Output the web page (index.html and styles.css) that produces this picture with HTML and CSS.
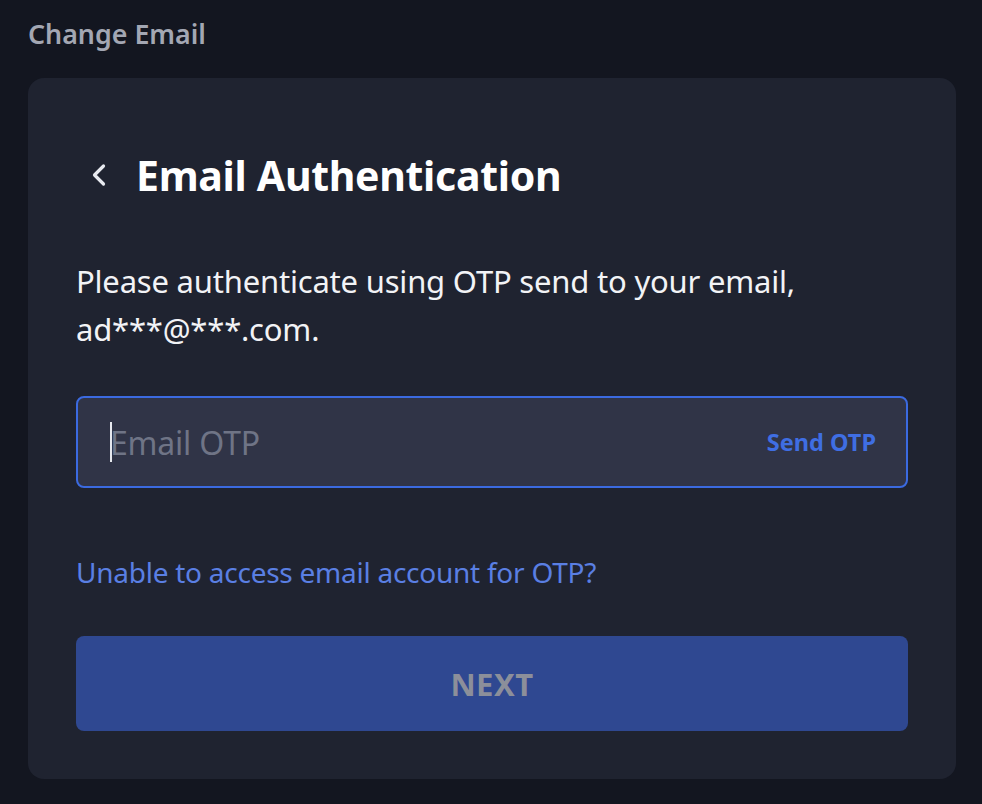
FILE: index.html
```html
<!DOCTYPE html>
<html lang="en">
<head>
<meta charset="utf-8">
<title>Change Email</title>
<link rel="stylesheet" href="styles.css">
</head>
<body>
<div class="page">
  <div class="page-title">Change Email</div>
  <div class="card">
    <div class="heading">
      <svg class="back" width="18" height="26" viewBox="0 0 18 26" aria-hidden="true"><path d="M13.5 4 L4.5 13 L13.5 22" fill="none" stroke="#e8eaf0" stroke-width="3.2" stroke-linecap="round" stroke-linejoin="round"/></svg>
      <h1 class="heading-text">Email Authentication</h1>
    </div>
    <p class="desc">Please authenticate using OTP send to your email,<br>ad***@***.com.</p>
    <div class="field">
      <span class="caret"></span>
      <span class="placeholder">Email OTP</span>
      <span class="send">Send OTP</span>
    </div>
    <a class="help" href="#">Unable to access email account for OTP?</a>
    <div class="next">NEXT</div>
  </div>
</div>
</body>
</html>
```
FILE: styles.css
```css
html, body {
  margin: 0;
  padding: 0;
  background: #131620;
}
body {
  font-family: "Noto Sans", "Open Sans", sans-serif;
  width: 982px;
  height: 804px;
  overflow: hidden;
}
.page {
  padding: 16px 26px 0 28px;
}
.page-title {
  font-size: 26.8px;
  font-weight: 600;
  color: #a3a7b3;
  line-height: 36px;
  margin-bottom: 26px;
}
.card {
  background: #1f2330;
  border-radius: 16px;
  padding: 69px 48px 48px 48px;
  display: flex;
  flex-direction: column;
}
.heading {
  display: flex;
  align-items: center;
  height: 56px;
}
.back {
  margin-left: 14px;
  margin-right: 28px;
  flex: none;
}
.heading-text {
  margin: 0;
  font-size: 41px;
  font-weight: 700;
  color: #ffffff;
  line-height: 56px;
  letter-spacing: -0.3px;
}
.desc {
  margin: 54px 0 0 0;
  font-size: 31px;
  line-height: 48px;
  color: #f2f3f6;
  letter-spacing: -0.2px;
}
.field {
  margin-top: 43px;
  height: 88px;
  border: 2px solid #3b6ae0;
  border-radius: 8px;
  background: #303447;
  display: flex;
  align-items: center;
  padding: 0 30px 0 32px;
}
.caret {
  width: 2px;
  height: 40px;
  background: #e6e8ee;
  flex: none;
}
.placeholder {
  font-size: 32px;
  color: #6f7486;
  flex: 1;
  letter-spacing: -0.2px;
  margin-left: -2px;
}
.send {
  font-size: 23.5px;
  font-weight: 700;
  color: #3f6ee3;
}
.help {
  margin-top: 64px;
  font-size: 28px;
  line-height: 40px;
  color: #5a7fe3;
  text-decoration: none;
  align-self: flex-start;
  letter-spacing: -0.25px;
}
.next {
  margin-top: 44px;
  height: 95px;
  border-radius: 8px;
  background: #2f4891;
  display: flex;
  align-items: center;
  justify-content: center;
  font-size: 31px;
  font-weight: 700;
  color: #8c8f9a;
  letter-spacing: 0.5px;
}
```
